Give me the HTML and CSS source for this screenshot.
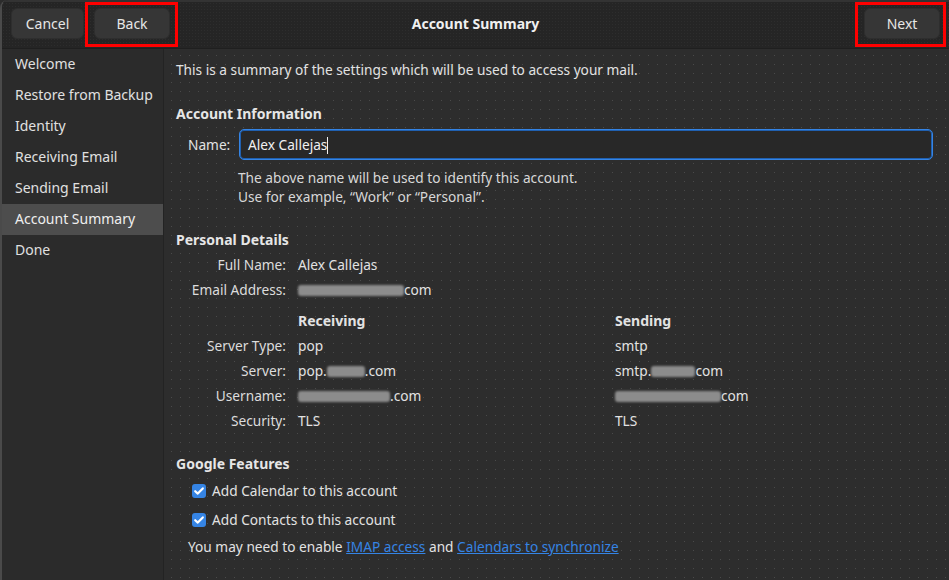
FILE: index.html
```html
<!DOCTYPE html>
<html lang="en">
<head>
<meta charset="utf-8">
<title>Account Summary</title>
<link rel="stylesheet" href="styles.css">
</head>
<body>
<div class="window">
  <header class="headerbar">
    <div class="hb-start">
      <button class="btn btn-cancel">Cancel</button>
      <div class="mark"><button class="btn btn-back">Back</button></div>
    </div>
    <div class="hb-title">Account Summary</div>
    <div class="hb-end">
      <div class="mark mark-next"><button class="btn btn-next">Next</button></div>
    </div>
  </header>
  <div class="body">
    <nav class="sidebar">
      <div class="side-row">Welcome</div>
      <div class="side-row">Restore from Backup</div>
      <div class="side-row">Identity</div>
      <div class="side-row">Receiving Email</div>
      <div class="side-row">Sending Email</div>
      <div class="side-row selected">Account Summary</div>
      <div class="side-row">Done</div>
    </nav>
    <main class="content">
      <p class="intro">This is a summary of the settings which will be used to access your mail.</p>

      <h2 class="section section-account">Account Information</h2>
      <div class="name-row">
        <span class="name-label">Name:</span>
        <div class="entry">Alex Callejas<span class="caret"></span></div>
      </div>
      <div class="hint">
        <div>The above name will be used to identify this account.</div>
        <div>Use for example, “Work” or “Personal”.</div>
      </div>

      <h2 class="section section-personal">Personal Details</h2>
      <div class="details">
        <span class="lbl">Full Name:</span><span class="val">Alex Callejas</span><span></span>
        <span class="lbl">Email Address:</span><span class="val"><span class="blur w106"></span>com</span><span></span>
      </div>
      <div class="details servers">
        <span></span><span class="val head">Receiving</span><span class="val head">Sending</span>
        <span class="lbl">Server Type:</span><span class="val">pop</span><span class="val">smtp</span>
        <span class="lbl">Server:</span><span class="val">pop.<span class="blur w38"></span>.com</span><span class="val">smtp.<span class="blur w44"></span>com</span>
        <span class="lbl">Username:</span><span class="val"><span class="blur w92"></span>.com</span><span class="val"><span class="blur w106"></span>com</span>
        <span class="lbl">Security:</span><span class="val">TLS</span><span class="val">TLS</span>
      </div>

      <h2 class="section section-google">Google Features</h2>
      <div class="checks">
        <label class="check-row"><span class="check"><svg viewBox="0 0 14 14" width="14" height="14"><path d="M3.2 7.2 L5.8 9.6 L10.8 4.4" fill="none" stroke="#fff" stroke-width="2.2" stroke-linecap="round" stroke-linejoin="round"/></svg></span>Add Calendar to this account</label>
        <label class="check-row"><span class="check"><svg viewBox="0 0 14 14" width="14" height="14"><path d="M3.2 7.2 L5.8 9.6 L10.8 4.4" fill="none" stroke="#fff" stroke-width="2.2" stroke-linecap="round" stroke-linejoin="round"/></svg></span>Add Contacts to this account</label>
      </div>
      <p class="note">You may need to enable <a href="#">IMAP access</a> and <a href="#">Calendars to synchronize</a></p>
    </main>
  </div>
</div>
</body>
</html>
```

FILE: styles.css
```css
* { box-sizing: border-box; }

html, body {
  margin: 0;
  padding: 0;
  background: #2c2c2c;
}

body {
  font-family: "Noto Sans", "Open Sans", sans-serif;
  font-size: 13.7px;
  color: #e2e2e2;
  width: 949px;
  height: 580px;
  overflow: hidden;
}

.window {
  width: 949px;
  height: 580px;
  display: flex;
  flex-direction: column;
  border-left: 2px solid #4a4a4a;
  border-top-left-radius: 8px;
  overflow: hidden;
  background: #2d2d2d;
}

.headerbar {
  height: 49px;
  flex: 0 0 49px;
  display: flex;
  align-items: flex-start;
  justify-content: space-between;
  background-color: #252525;
  background-image: radial-gradient(circle, #2d2d2d 0.6px, transparent 0.9px);
  background-size: 3px 3px;
  border-top: 2px solid #333333;
  border-bottom: 1px solid #1f1f1f;
  position: relative;
}

.hb-start {
  display: flex;
  align-items: flex-start;
  padding-left: 9px;
  gap: 0;
}

.hb-end {
  display: flex;
  align-items: flex-start;
  padding-right: 3px;
}

.hb-title {
  position: absolute;
  left: 0;
  right: 0;
  text-align: center;
  font-weight: 700;
  font-size: 14px;
  color: #f0f0f0;
  pointer-events: none;
  top: 12px;
}

.btn {
  font-family: inherit;
  font-size: 14px;
  color: #e6e6e6;
  background: #363636;
  border: 1px solid #2e2e2e;
  border-radius: 6px;
  height: 31px;
  padding: 0;
  line-height: 28px;
  text-align: center;
}

.btn-cancel { width: 73px; margin-top: 6px; margin-right: 1px; }
.btn-back { width: 76px; }
.btn-next { width: 76px; }

.mark {
  border: 3px solid #ff0000;
  padding: 3px 5px 5px 6px;
}

.mark-next {
  padding: 3px 3px 5px 6px;
}

.body {
  flex: 1;
  display: flex;
  min-height: 0;
}

.sidebar {
  width: 162px;
  flex: 0 0 162px;
  background: #2b2b2b;
  border-right: 1px solid #232323;
}

.side-row {
  height: 31px;
  line-height: 29px;
  padding-bottom: 2px;
  padding-left: 13px;
  font-size: 14px;
  color: #e0e0e0;
  white-space: nowrap;
}

.side-row.selected {
  background: #4d4d4d;
  color: #efefef;
}

.content {
  flex: 1;
  padding: 11px 16px 0 12px;
  background-color: #2d2d2d;
  background-image: radial-gradient(circle, #4a4a4a 0.7px, transparent 1px);
  background-size: 9px 9px;
  background-position: 3px 2px;
}

.intro {
  margin: 0;
  line-height: 20px;
}

.section {
  margin: 23px 0 0;
  font-size: 14px;
  font-weight: 700;
  line-height: 20px;
  color: #e6e6e6;
}

.section-account { margin-top: 24px; }

.name-row {
  margin-top: 5px;
  display: flex;
  align-items: center;
  padding-left: 12px;
}

.name-label {
  width: 51px;
  flex: 0 0 51px;
  line-height: 20px;
}

.entry {
  flex: 1;
  height: 31px;
  line-height: 29px;
  padding: 0 8px;
  border: 1px solid #3584e4;
  box-shadow: 0 0 0 1px #2060b0 inset;
  border-radius: 5px;
  background: #282828;
  color: #f0f0f0;
}

.caret {
  display: inline-block;
  width: 1px;
  height: 17px;
  background: #f0f0f0;
  vertical-align: -4px;
}

.hint {
  margin-top: 8px;
  padding-left: 62px;
  line-height: 19px;
  color: #d8d8d8;
}

.section-personal { margin-top: 24px; }

.details {
  margin-top: 2px;
  padding-left: 12px;
  display: grid;
  grid-template-columns: 98px 305px 1fr;
  column-gap: 12px;
  grid-auto-rows: 25px;
  align-items: center;
}

.servers { margin-top: 6px; }

.lbl {
  text-align: right;
  white-space: nowrap;
  color: #dcdcdc;
}

.val {
  white-space: nowrap;
}

.head {
  font-weight: 700;
  font-size: 14px;
}

.blur {
  display: inline-block;
  height: 11px;
  background: #8c8c8c;
  filter: blur(1.3px);
  vertical-align: -1px;
  border-radius: 3px;
}

.w38 { width: 38px; }
.w44 { width: 44px; }
.w92 { width: 92px; }
.w106 { width: 106px; }

.section-google { margin-top: 21px; }

.checks {
  margin-top: 2px;
}

.check-row {
  display: flex;
  align-items: center;
  height: 29px;
  padding-left: 16px;
}

.check {
  width: 14px;
  height: 14px;
  border-radius: 3px;
  background: #3584e4;
  margin-right: 6px;
  display: inline-flex;
}

.note {
  margin: 3px 0 0;
  padding-left: 12px;
  line-height: 20px;
}

.note a {
  color: #3584e4;
  text-decoration: underline;
}
```
